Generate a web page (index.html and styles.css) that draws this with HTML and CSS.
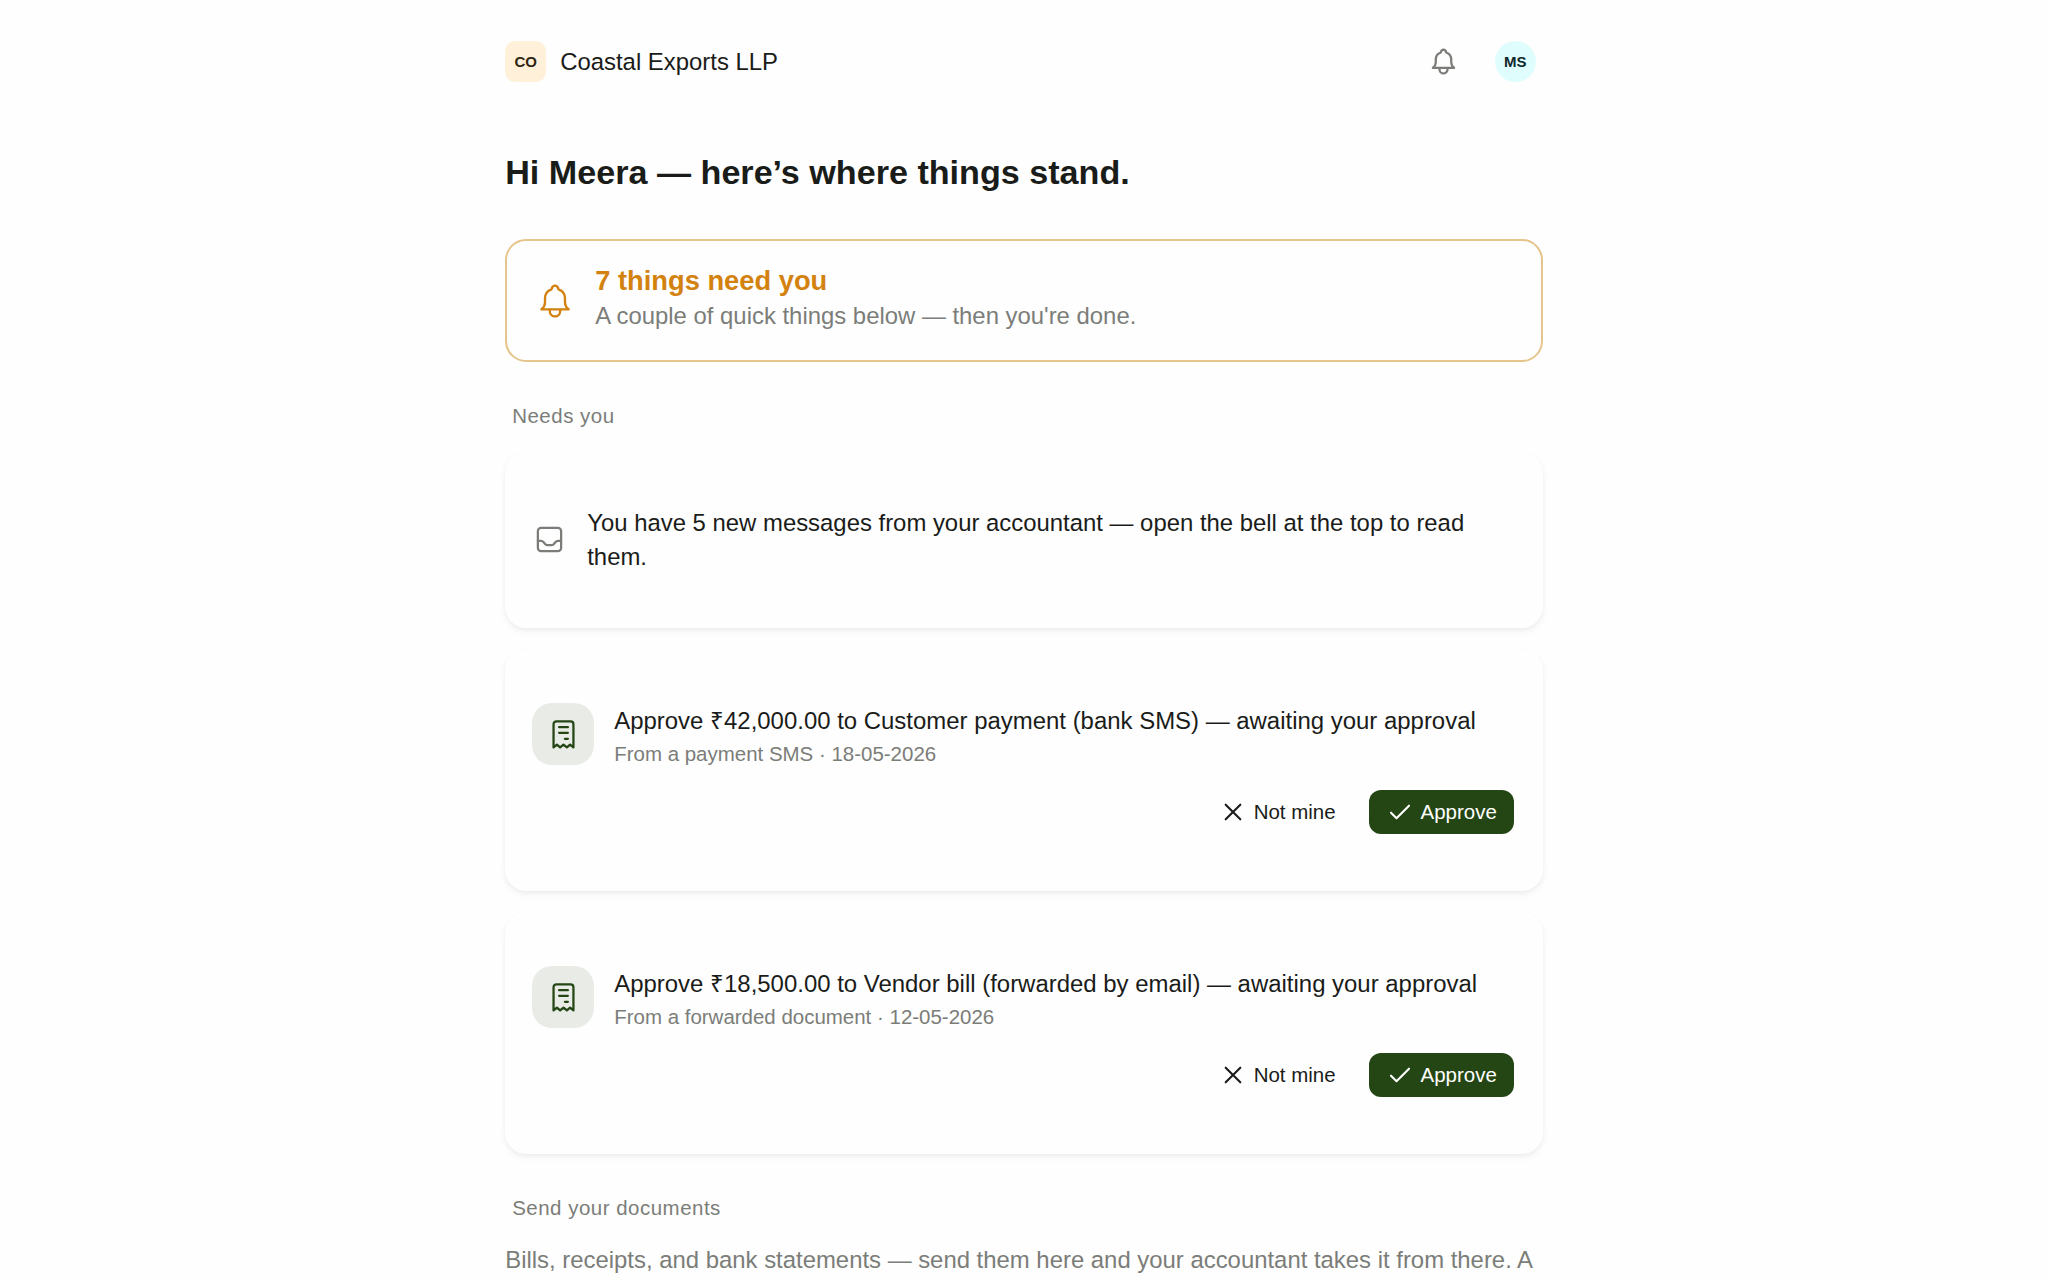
FILE: index.html
```html
<!DOCTYPE html>
<html lang="en">
<head>
    <meta charset="UTF-8">
    <meta name="viewport" content="width=device-width, initial-scale=1.0">
    <title>Coastal Exports LLP</title>
    <link rel="stylesheet" href="styles.css">
</head>
<body>
    <!-- Shared icons -->
    <svg class="sprite" aria-hidden="true">
        <symbol id="icon-bell" viewBox="0 0 24 24">
            <path d="M3.800 17h16.400c-1.400-1.100-2.200-2.200-2.200-4v-2.500c0-2.700-1.500-4.700-3.900-5.500C13.800 3.600 13.100 2.800 12 2.800s-1.800.8-2.100 2.200c-2.400.8-3.900 2.800-3.900 5.500V13c0 1.800-.8 2.900-2.200 4z"/>
            <path d="M8.900 17.200v.9a3.100 3.100 0 0 0 6.200 0v-.9"/>
        </symbol>
        <symbol id="icon-inbox" viewBox="0 0 24 24">
            <rect x="3" y="3" width="18" height="18" rx="2.500"/>
            <path d="M3 13h2.500c.8 0 1.300.3 1.800.9l1.300 1.500c.6.700 1.100 1 1.900 1h3c.8 0 1.300-.3 1.900-1l1.300-1.500c.5-.6 1-.9 1.800-.9H21"/>
        </symbol>
        <symbol id="icon-receipt" viewBox="0 0 24 24">
            <path d="M4.300 22V4a2.200 2.200 0 0 1 2.200-2.200h11A2.200 2.200 0 0 1 19.700 4v18l-2.600-2.200-2.500 2.200-2.600-2.200L9.400 22l-2.500-2.200z"/>
            <path d="M8.600 6.300h6.800M8.600 10.700h6.800M13.100 15.300h2.300"/>
        </symbol>
        <symbol id="icon-close" viewBox="0 0 24 24">
            <path d="M4.700 4.700l14.600 14.600M19.300 4.700L4.700 19.300"/>
        </symbol>
        <symbol id="icon-check" viewBox="0 0 24 24">
            <path d="M3 12.700l5.500 5.500L21 5.700"/>
        </symbol>
    </svg>

    <main class="page">
        <header class="topbar">
            <span class="org-badge">CO</span>
            <span class="org-name">Coastal Exports LLP</span>
            <button class="bell-button" aria-label="Notifications">
                <svg class="icon"><use href="#icon-bell"/></svg>
            </button>
            <span class="avatar">MS</span>
        </header>

        <h1>Hi Meera — here’s where things stand.</h1>

        <section class="banner">
            <svg class="icon banner-icon"><use href="#icon-bell"/></svg>
            <div>
                <h2>7 things need you</h2>
                <p>A couple of quick things below — then you're done.</p>
            </div>
        </section>

        <h3 class="section-label">Needs you</h3>
        <div class="card-list">
            <article class="card message">
                <svg class="icon message-icon"><use href="#icon-inbox"/></svg>
                <p>You have 5 new messages from your accountant — open the bell at the top to read them.</p>
            </article>

            <article class="card">
                <div class="approval">
                    <span class="tile"><svg class="icon"><use href="#icon-receipt"/></svg></span>
                    <div>
                        <p class="title">Approve ₹42,000.00 to Customer payment (bank SMS) — awaiting your approval</p>
                        <p class="meta">From a payment SMS · 18-05-2026</p>
                    </div>
                </div>
                <div class="actions">
                    <button class="btn"><svg class="icon"><use href="#icon-close"/></svg>Not mine</button>
                    <button class="btn btn-primary"><svg class="icon"><use href="#icon-check"/></svg>Approve</button>
                </div>
            </article>

            <article class="card">
                <div class="approval">
                    <span class="tile"><svg class="icon"><use href="#icon-receipt"/></svg></span>
                    <div>
                        <p class="title">Approve ₹18,500.00 to Vendor bill (forwarded by email) — awaiting your approval</p>
                        <p class="meta">From a forwarded document · 12-05-2026</p>
                    </div>
                </div>
                <div class="actions">
                    <button class="btn"><svg class="icon"><use href="#icon-close"/></svg>Not mine</button>
                    <button class="btn btn-primary"><svg class="icon"><use href="#icon-check"/></svg>Approve</button>
                </div>
            </article>
        </div>

        <h3 class="section-label">Send your documents</h3>
        <p class="intro">Bills, receipts, and bank statements — send them here and your accountant takes it from there. A</p>
    </main>
</body>
</html>
```

FILE: styles.css
```css
:root {
    --text: #1a1c19;
    --muted: #7b7d79;
    --amber: #d38210;
    --green: #244614;
    --surface: #fefefe;
}

* {
    margin: 0;
    padding: 0;
    box-sizing: border-box;
}

body {
    height: 1280px;
    overflow: hidden;
    font-family: "Liberation Sans", Arial, sans-serif;
    font-size: 23.9px;
    line-height: 34px;
    color: var(--text);
    background: var(--surface);
}

.sprite {
    display: none;
}

.icon {
    flex: none;
    width: 31px;
    height: 31px;
    fill: none;
    stroke: currentColor;
    stroke-width: 1.75;
    stroke-linecap: round;
    stroke-linejoin: round;
}

.page {
    width: 1037.6px;
    margin: 0 auto;
    padding-top: 41px;
}

.topbar {
    display: flex;
    align-items: center;
    height: 41px;
    padding-right: 7px;
}

.org-badge,
.avatar {
    display: flex;
    align-items: center;
    justify-content: center;
    width: 41px;
    height: 41px;
    font-size: 15px;
    font-weight: bold;
}

.org-badge {
    border-radius: 10px;
    background: #fff1d9;
    color: #2c2510;
}

.org-name {
    margin-left: 14px;
}

.bell-button {
    display: flex;
    margin-left: auto;
    margin-right: 36px;
    border: none;
    background: none;
    color: var(--muted);
}

.avatar {
    border-radius: 50%;
    background: #dffdfd;
    color: #10272b;
}

h1 {
    margin-top: 67px;
    font-size: 34.13px;
    line-height: 46px;
}

.banner {
    display: flex;
    align-items: center;
    gap: 20px;
    height: 123px;
    margin-top: 44px;
    padding: 0 28px;
    border: 2px solid #e6c58c;
    border-radius: 21px;
}

.banner > div {
    padding-bottom: 6px;
}

.banner-icon {
    width: 40px;
    height: 40px;
    color: var(--amber);
    stroke-width: 1.4;
}

.banner h2 {
    font-size: 27.3px;
    line-height: 37px;
    color: var(--amber);
}

.banner p {
    color: var(--muted);
}

.section-label {
    margin-top: 40px;
    padding-left: 7px;
    font-size: 20.48px;
    font-weight: normal;
    line-height: 28px;
    letter-spacing: 0.5px;
    color: var(--muted);
}

.card-list {
    display: flex;
    flex-direction: column;
    gap: 21px;
    margin-top: 22px;
}

.card {
    padding: 54px 29px 54px 27px;
    border-radius: 21px;
    background: var(--surface);
    box-shadow: 0 2px 4px rgba(0, 0, 0, 0.05), 0 4px 10px rgba(0, 0, 0, 0.03);
}

.message {
    display: flex;
    align-items: center;
    gap: 22px;
}

.message-icon {
    margin-left: 2px;
    margin-bottom: 1px;
    color: var(--muted);
}

.approval {
    display: flex;
    gap: 20px;
}

.tile {
    display: flex;
    align-items: center;
    justify-content: center;
    width: 62px;
    height: 62px;
    border-radius: 20px;
    background: #e9ece6;
    color: var(--green);
}

.title {
    padding-top: 1px;
    font-size: 23.95px;
}

.meta {
    font-size: 20.48px;
    line-height: 32px;
    color: var(--muted);
}

.actions {
    display: flex;
    justify-content: flex-end;
    gap: 16px;
    margin-top: 20px;
    margin-bottom: 3px;
}

.btn {
    display: flex;
    align-items: center;
    gap: 9px;
    height: 44px;
    padding: 0 17px 0 19px;
    border: none;
    border-radius: 12px;
    background: none;
    color: var(--text);
    font-family: inherit;
    font-size: 20.48px;
}

.btn .icon {
    width: 24px;
    height: 24px;
    stroke-width: 2.1;
}

.btn-primary {
    background: var(--green);
    color: #fff;
}

.intro {
    margin-top: 21px;
    color: var(--muted);
    white-space: nowrap;
}
```
